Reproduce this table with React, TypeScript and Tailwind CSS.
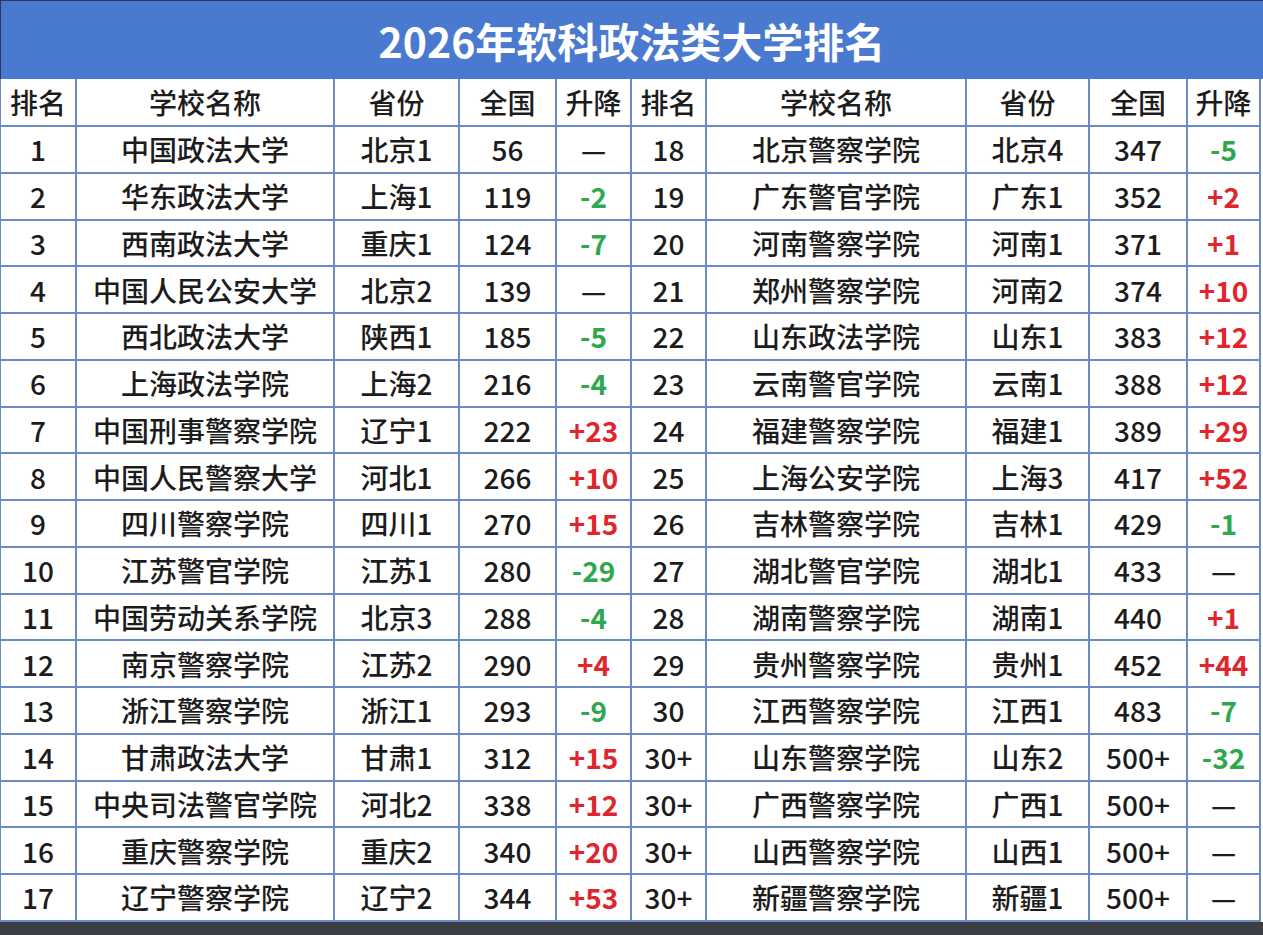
const LEFT = [
  ['1', '中国政法大学', '北京1', '56', '—'],
  ['2', '华东政法大学', '上海1', '119', '-2'],
  ['3', '西南政法大学', '重庆1', '124', '-7'],
  ['4', '中国人民公安大学', '北京2', '139', '—'],
  ['5', '西北政法大学', '陕西1', '185', '-5'],
  ['6', '上海政法学院', '上海2', '216', '-4'],
  ['7', '中国刑事警察学院', '辽宁1', '222', '+23'],
  ['8', '中国人民警察大学', '河北1', '266', '+10'],
  ['9', '四川警察学院', '四川1', '270', '+15'],
  ['10', '江苏警官学院', '江苏1', '280', '-29'],
  ['11', '中国劳动关系学院', '北京3', '288', '-4'],
  ['12', '南京警察学院', '江苏2', '290', '+4'],
  ['13', '浙江警察学院', '浙江1', '293', '-9'],
  ['14', '甘肃政法大学', '甘肃1', '312', '+15'],
  ['15', '中央司法警官学院', '河北2', '338', '+12'],
  ['16', '重庆警察学院', '重庆2', '340', '+20'],
  ['17', '辽宁警察学院', '辽宁2', '344', '+53'],
]

const RIGHT = [
  ['18', '北京警察学院', '北京4', '347', '-5'],
  ['19', '广东警官学院', '广东1', '352', '+2'],
  ['20', '河南警察学院', '河南1', '371', '+1'],
  ['21', '郑州警察学院', '河南2', '374', '+10'],
  ['22', '山东政法学院', '山东1', '383', '+12'],
  ['23', '云南警官学院', '云南1', '388', '+12'],
  ['24', '福建警察学院', '福建1', '389', '+29'],
  ['25', '上海公安学院', '上海3', '417', '+52'],
  ['26', '吉林警察学院', '吉林1', '429', '-1'],
  ['27', '湖北警官学院', '湖北1', '433', '—'],
  ['28', '湖南警察学院', '湖南1', '440', '+1'],
  ['29', '贵州警察学院', '贵州1', '452', '+44'],
  ['30', '江西警察学院', '江西1', '483', '-7'],
  ['30+', '山东警察学院', '山东2', '500+', '-32'],
  ['30+', '广西警察学院', '广西1', '500+', '—'],
  ['30+', '山西警察学院', '山西1', '500+', '—'],
  ['30+', '新疆警察学院', '新疆1', '500+', '—'],
]

const HEAD = ['排名', '学校名称', '省份', '全国', '升降']

function Change({ v }: { v: string }) {
  if (v.startsWith('+')) return <span className="font-bold text-[#e0262c]">{v}</span>
  if (v.startsWith('-')) return <span className="font-bold text-[#2ea84e]">{v}</span>
  return <span>{v}</span>
}

export default function App() {
  return (
    <div
      className="w-[1263px] h-[935px] bg-[#3b3e45] overflow-hidden text-[#1c1c1c]"
      style={{ fontFamily: '"Noto Sans CJK SC", "Noto Sans", sans-serif' }}
    >
      {/* Title */}
      <div className="h-[79px] bg-[#4a7acf] border-t border-l border-[#2c3a55] flex items-center justify-center">
        <h1 className="text-[41px] font-bold text-white leading-none">2026年软科政法类大学排名</h1>
      </div>

      {/* Table */}
      <div className="bg-white w-[1263px]">
        <div className="w-[1261px] bg-[#6a8bc8] pl-px pr-[2px] pb-[2px] grid grid-cols-[74px_256px_123px_95px_73px_73px_258px_121px_96px_71px] gap-[2px] text-[28px] font-medium">
          {[...HEAD, ...HEAD].map((h, i) => (
            <div key={'h' + i} className="bg-white h-[46px] flex items-center justify-center leading-none">
              {h}
            </div>
          ))}
          {LEFT.map((l, r) => {
            const rr = RIGHT[r]
            return [...l, ...rr].map((c, i) => (
              <div key={r + '-' + i} className="bg-white h-[44.75px] flex items-center justify-center leading-none whitespace-nowrap">
                {i % 5 === 4 ? <Change v={c} /> : c}
              </div>
            ))
          })}
        </div>
      </div>
    </div>
  )
}
